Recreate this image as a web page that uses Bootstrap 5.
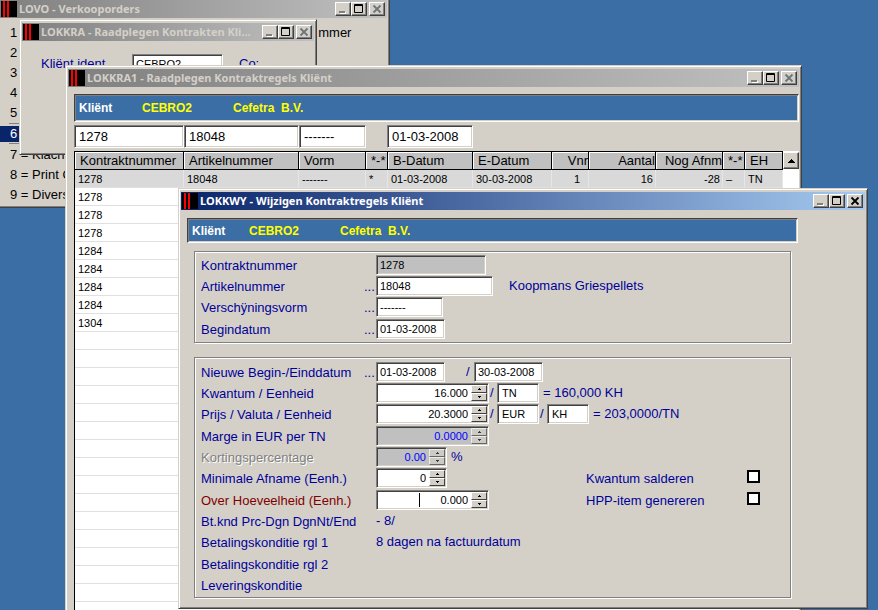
<!DOCTYPE html>
<html lang="nl">
<head>
<meta charset="utf-8">
<meta name="viewport" content="width=device-width, initial-scale=1">
<title>LOKKWY - Wijzigen Kontraktregels Kliënt</title>
<link href="https://cdn.jsdelivr.net/npm/bootstrap@5.3.0/dist/css/bootstrap.min.css" rel="stylesheet">
<style>
:root{--face:#d4d0c8;--desk:#3a6ea5;--ink:#000099}
body{background:var(--desk);font:13px/18px "Liberation Sans",Arial,sans-serif;color:#000}
.desktop{min-height:100vh}
.ink{color:var(--ink)}
/* windows on the desktop */
.win{position:absolute;background:var(--face);border:1px solid;border-color:var(--face) #404040 #404040 var(--face);box-shadow:inset 1px 1px #fff,inset -1px -1px #808080;padding:3px 2px}
.win-lovo{left:-3px;top:-4px;width:393px;height:212px}
.win-lokkra{left:19px;top:19px;width:298px;height:136px}
.win-lokkra1{left:65px;top:65px;width:737px;bottom:-4px;overflow:hidden}
.win-lokkwy{left:178px;top:188px;width:690px}
.title-bar{height:18px;padding:0 2px 0 1px;background:linear-gradient(90deg,#808080,#c0c0c0);color:var(--face)}
.title-bar.active-bar{background:linear-gradient(90deg,#0a246a,#a6caf0);color:#fff}
.title-text{font:bold 11px/15px "Noto Sans",Tahoma,sans-serif;margin:0;padding:0 0 2px 2px}
.title-bar svg{flex:none}
.cap-btn{width:16px;height:14px;flex:none;padding:0;border:1px solid;border-color:#fff #404040 #404040 #fff;box-shadow:inset -1px -1px #808080;background:var(--face);display:flex}
.cap-btn:last-child{margin-left:2px}
/* sunken and etched surfaces */
.sunken{border:1px solid;border-color:#808080 #fff #fff #808080;box-shadow:inset 1px 1px #404040,inset -1px -1px var(--face);background:#fff;border-radius:0}
.banner{background:var(--desk);border:1px solid;border-color:#404040 #fff #fff #404040;box-shadow:inset 1px 1px #808080,inset -1px -1px var(--face);font-weight:bold;font-size:12px;color:#ff0;padding-left:4px;height:28px;white-space:pre}
.banner .b-label{color:#fff;width:63px}
.banner .b-code{width:91px}
.banner.low{height:25px}
.banner.low .b-label{width:57px}
.etched{border:1px solid #808080;box-shadow:inset 1px 1px #fff,1px 1px #fff;padding:3px 0 2px 6px}
.etched+.etched{margin-top:14px;padding:4px 0 1px 6px}
input.sunken{height:20px;padding:0 3px;font-size:11px;line-height:16px;color:#000;min-width:0;outline:0}
.filters{padding:3px 0}
.filters input.sunken{height:23px;font-size:13px;padding-left:4px}
.filters .apart{margin-left:21px}
.w-42{width:42px}.w-67{width:67px}.w-69{width:69px}.w-71{width:71px}.w-86{width:86px}.w-91{width:91px}.w-110{width:110px}.w-113{width:113px}.w-115{width:115px}.w-117{width:117px}
input.sunken.w-42{padding-left:4px}
.off,input.off{background:#c0c0c0}
.spin{height:20px;padding:1px}
.spin input{border:0;background:none;flex:1;min-width:0;padding:0 3px 0 0;text-align:right;font-size:11px;line-height:16px;outline:0}
.spin.off input{color:#00f}
.spin-btns{width:16px}
.spin-btns button{flex:1;padding:0;border:1px solid;border-color:#fff #404040 #404040 #fff;background:var(--face);display:flex;align-items:center;justify-content:center;min-height:0}
.spin.off button{opacity:.7}
.caret-bar{width:1px;height:14px;background:#000;margin-left:41px}
/* form grid */
.form-rows{display:grid;grid-template-columns:163px 12px 210px 161px 1fr;grid-auto-rows:21px 21px 22px;color:var(--ink);white-space:nowrap}
.form-rows>label,.form-rows>.lbl{grid-column:1;line-height:21px}
.form-rows>.dots{grid-column:2;line-height:21px}
.form-rows>.fld{grid-column:3/-1;display:flex;align-items:center;height:20px}
.form-rows>.fld.short{grid-column:3}
.form-rows>.opt{grid-column:4;line-height:21px}
.form-rows>.tick{grid-column:5}
.dim{color:#808080;text-shadow:1px 1px #fff}
.warn{color:#800000}
.slash{width:8px;padding-left:1px}
.slash-date{width:29px;padding-left:21px}
.tick{appearance:none;width:13px;height:13px;border:2px solid #000;background:#fff;margin:2px 0 0}
/* contract lines */
.lines{table-layout:fixed;border-collapse:separate;border-spacing:0;border:1px solid #000;border-width:1px 0 0 1px;background:#fff;flex:1;width:1px}
.lines th,.lines td{padding:0;height:18px;white-space:nowrap;overflow:hidden}
.lines th{font-weight:normal;line-height:17px;background:#c0c0c0;border:solid #000;border-width:0 1px 1px 0;box-shadow:inset 1px 1px #fff;padding-left:5px}
.lines td{font-size:11px;line-height:15px;border-bottom:1px solid #e0e0e0;padding:2px 2px 0 3px}
.lines .current td{background:#d9d9d9;border-right:1px solid #e6e6e6}
.lines .num{text-align:right}
.lines th.num{padding-left:0}
.scroll-col{width:16px;background:#fff}
.scroll-col button{width:16px;height:17px;margin-top:1px;padding:0;border:1px solid;border-color:#fff #404040 #404040 #fff;box-shadow:inset -1px -1px #808080;background:var(--face);display:flex;align-items:center;justify-content:center}
/* menu */
.menu{padding:5px 0 0 10px;line-height:20px}
.menu .chosen{position:relative;height:16px;line-height:16px;margin:3px 0 3px -10px;padding-left:10px;background:#0a246a;color:#fff}
.menu .chosen::before{content:"";position:absolute;left:9px;width:12px;top:-3px;height:21px;border:solid #808080;border-width:1px 0}
.menu .tail{margin-left:301px}
.ident{padding:13px 0 0 19px}
.lokkra1-body{padding:7px 0 0 6px}
.wy-body{padding:8px 67px 7px 6px}
.wy-groups{padding:8px 7px 0}
</style>
</head>
<body>
<svg width="0" height="0" class="d-none" aria-hidden="true">
  <symbol id="logo" viewBox="0 0 16 16"><path fill="#000" d="M0 0h16v16H0z"/><path fill="#f00" d="M2 0h2v16H2zM6 0h2v16H6z"/></symbol>
  <symbol id="min" viewBox="0 0 14 12"><path fill="#fff" d="M4 9h6v2H4z"/><path fill="#808080" d="M3 8h6v2H3z"/></symbol>
  <symbol id="max" viewBox="0 0 14 12"><path fill="none" stroke="#000" d="M2.5 1.5h8v8h-8zM2 2.5h9"/></symbol>
  <symbol id="cls" viewBox="0 0 14 12"><path fill="none" stroke="currentColor" stroke-width="1.8" d="M3.5 2.5l7 7M10.5 2.5l-7 7"/></symbol>
  <symbol id="up" viewBox="0 0 7 4"><path d="M3 0h1v1h1v1h1v1h1v1H0V3h1V2h1V1h1z"/></symbol>
  <symbol id="sup" viewBox="0 0 3 2"><path d="M1 0h1v1h1v1H0V1h1z"/></symbol>
  <symbol id="sdn" viewBox="0 0 3 2"><path d="M0 0h3v1H2v1H1V1H0z"/></symbol>
</svg>
<main class="desktop position-relative overflow-hidden">

  <section class="win win-lovo">
    <div class="title-bar d-flex align-items-center">
      <svg width="16" height="16"><use href="#logo"/></svg>
      <h2 class="title-text flex-grow-1 text-truncate">LOVO - Verkooporders</h2>
      <button class="cap-btn" aria-label="Minimaliseren"><svg width="14" height="12"><use href="#min"/></svg></button>
      <button class="cap-btn" aria-label="Maximaliseren"><svg width="14" height="12"><use href="#max"/></svg></button>
      <button class="cap-btn text-secondary" aria-label="Sluiten"><svg width="14" height="12"><use href="#cls"/></svg></button>
    </div>
    <ul class="menu list-unstyled mb-0">
      <li class="d-flex"><span>1</span><span class="tail">mmer</span></li>
      <li>2</li><li>3</li><li>4</li><li>5</li>
      <li class="chosen">6</li>
      <li>7 = Klacht</li><li>8 = Print O</li><li>9 = Divers</li>
    </ul>
  </section>

  <section class="win win-lokkra">
    <div class="title-bar d-flex align-items-center">
      <svg width="16" height="16"><use href="#logo"/></svg>
      <h2 class="title-text flex-grow-1 text-truncate">LOKKRA - Raadplegen Kontrakten Kli...</h2>
      <button class="cap-btn" aria-label="Minimaliseren"><svg width="14" height="12"><use href="#min"/></svg></button>
      <button class="cap-btn" aria-label="Maximaliseren"><svg width="14" height="12"><use href="#max"/></svg></button>
      <button class="cap-btn text-secondary" aria-label="Sluiten"><svg width="14" height="12"><use href="#cls"/></svg></button>
    </div>
    <div class="ident d-flex align-items-center">
      <label for="ident" class="w-91 ink">Kliënt ident</label>
      <input id="ident" class="sunken w-91" value="CEBRO2">
      <span class="ps-3 ink">Co:</span>
    </div>
  </section>

  <section class="win win-lokkra1">
    <div class="title-bar d-flex align-items-center">
      <svg width="16" height="16"><use href="#logo"/></svg>
      <h2 class="title-text flex-grow-1 text-truncate">LOKKRA1 - Raadplegen Kontraktregels Kliënt</h2>
      <button class="cap-btn" aria-label="Minimaliseren"><svg width="14" height="12"><use href="#min"/></svg></button>
      <button class="cap-btn" aria-label="Maximaliseren"><svg width="14" height="12"><use href="#max"/></svg></button>
      <button class="cap-btn text-secondary" aria-label="Sluiten"><svg width="14" height="12"><use href="#cls"/></svg></button>
    </div>
    <div class="lokkra1-body">
      <div class="banner d-flex align-items-center"><span class="b-label">Kliënt</span><span class="b-code">CEBRO2</span><span>Cefetra  B.V.</span></div>
      <div class="filters d-flex">
        <input class="sunken w-110" aria-label="Kontraktnummer" value="1278">
        <input class="sunken w-115" aria-label="Artikelnummer" value="18048">
        <input class="sunken w-67" aria-label="Vorm" value="-------">
        <input class="sunken w-86 apart" aria-label="B-Datum" value="01-03-2008">
      </div>
      <div class="d-flex">
        <table class="lines">
          <colgroup><col style="width:109px"><col style="width:115px"><col style="width:67px"><col style="width:22px"><col style="width:85px"><col style="width:79px"><col style="width:37px"><col style="width:67px"><col style="width:67px"><col style="width:22px"><col></colgroup>
          <thead><tr><th>Kontraktnummer</th><th>Artikelnummer</th><th>Vorm</th><th>*-*</th><th>B-Datum</th><th>E-Datum</th><th class="num">Vnr</th><th class="num">Aantal</th><th class="num">Nog Afnm</th><th>*-*</th><th>EH</th></tr></thead>
          <tbody>
            <tr class="current"><td>1278</td><td>18048</td><td>-------</td><td>*</td><td>01-03-2008</td><td>30-03-2008</td><td class="num pe-2">1</td><td class="num">16</td><td class="num">-28</td><td>–</td><td>TN</td></tr>
            <tr><td colspan="11">1278</td></tr>
            <tr><td colspan="11">1278</td></tr>
            <tr><td colspan="11">1278</td></tr>
            <tr><td colspan="11">1284</td></tr>
            <tr><td colspan="11">1284</td></tr>
            <tr><td colspan="11">1284</td></tr>
            <tr><td colspan="11">1284</td></tr>
            <tr><td colspan="11">1304</td></tr>
            <tr><td colspan="11"></td></tr><tr><td colspan="11"></td></tr><tr><td colspan="11"></td></tr><tr><td colspan="11"></td></tr>
            <tr><td colspan="11"></td></tr><tr><td colspan="11"></td></tr><tr><td colspan="11"></td></tr><tr><td colspan="11"></td></tr>
            <tr><td colspan="11"></td></tr><tr><td colspan="11"></td></tr><tr><td colspan="11"></td></tr><tr><td colspan="11"></td></tr>
            <tr><td colspan="11"></td></tr><tr><td colspan="11"></td></tr><tr><td colspan="11"></td></tr><tr><td colspan="11"></td></tr>
          </tbody>
        </table>
        <div class="scroll-col"><button aria-label="Omhoog"><svg width="7" height="4"><use href="#up"/></svg></button></div>
      </div>
    </div>
  </section>

  <section class="win win-lokkwy">
    <div class="title-bar active-bar d-flex align-items-center">
      <svg width="16" height="16"><use href="#logo"/></svg>
      <h1 class="title-text flex-grow-1 text-truncate">LOKKWY - Wijzigen Kontraktregels Kliënt</h1>
      <button class="cap-btn" aria-label="Minimaliseren"><svg width="14" height="12"><use href="#min"/></svg></button>
      <button class="cap-btn" aria-label="Maximaliseren"><svg width="14" height="12"><use href="#max"/></svg></button>
      <button class="cap-btn text-black" aria-label="Sluiten"><svg width="14" height="12"><use href="#cls"/></svg></button>
    </div>
    <form class="wy-body">
      <div class="banner low d-flex align-items-center"><span class="b-label">Kliënt</span><span class="b-code">CEBRO2</span><span>Cefetra  B.V.</span></div>
      <div class="wy-groups">
        <div class="etched form-rows">
          <label for="kn">Kontraktnummer</label><div class="fld"><input id="kn" class="sunken off w-110" value="1278" readonly></div>
          <label for="an">Artikelnummer</label><span class="dots">...</span><div class="fld"><input id="an" class="sunken w-117" value="18048"><span class="ps-3">Koopmans Griespellets</span></div>
          <label for="vv">Verschÿningsvorm</label><span class="dots">...</span><div class="fld"><input id="vv" class="sunken w-67" value="-------"></div>
          <label for="bd">Begindatum</label><span class="dots">...</span><div class="fld"><input id="bd" class="sunken w-69" value="01-03-2008"></div>
        </div>
        <div class="etched form-rows">
          <label for="nb">Nieuwe Begin-/Einddatum</label><span class="dots">...</span>
          <div class="fld"><input id="nb" class="sunken w-69" value="01-03-2008"><span class="slash-date">/</span><input class="sunken w-69" aria-label="Einddatum" value="30-03-2008"></div>
          <label for="kw">Kwantum / Eenheid</label>
          <div class="fld"><div class="sunken spin w-113 d-flex"><input id="kw" value="16.000"><span class="spin-btns d-flex flex-column"><button type="button" aria-label="Meer"><svg width="3" height="2"><use href="#sup"/></svg></button><button type="button" aria-label="Minder"><svg width="3" height="2"><use href="#sdn"/></svg></button></span></div><span class="slash">/</span><input class="sunken w-42" aria-label="Eenheid" value="TN"><span class="ps-1">= 160,000 KH</span></div>
          <label for="pr">Prijs / Valuta / Eenheid</label>
          <div class="fld"><div class="sunken spin w-113 d-flex"><input id="pr" value="20.3000"><span class="spin-btns d-flex flex-column"><button type="button" aria-label="Meer"><svg width="3" height="2"><use href="#sup"/></svg></button><button type="button" aria-label="Minder"><svg width="3" height="2"><use href="#sdn"/></svg></button></span></div><span class="slash">/</span><input class="sunken w-42" aria-label="Valuta" value="EUR"><span class="slash">/</span><input class="sunken w-42" aria-label="Prijseenheid" value="KH"><span class="ps-1">= 203,0000/TN</span></div>
          <label for="mg">Marge in EUR per TN</label>
          <div class="fld"><div class="sunken spin off w-113 d-flex"><input id="mg" value="0.0000" readonly><span class="spin-btns d-flex flex-column"><button type="button" aria-label="Meer"><svg width="3" height="2"><use href="#sup"/></svg></button><button type="button" aria-label="Minder"><svg width="3" height="2"><use href="#sdn"/></svg></button></span></div></div>
          <label for="kp" class="dim">Kortingspercentage</label>
          <div class="fld"><div class="sunken spin off w-71 d-flex"><input id="kp" value="0.00" readonly><span class="spin-btns d-flex flex-column"><button type="button" aria-label="Meer"><svg width="3" height="2"><use href="#sup"/></svg></button><button type="button" aria-label="Minder"><svg width="3" height="2"><use href="#sdn"/></svg></button></span></div><span class="ps-1">%</span></div>
          <label for="ma">Minimale Afname (Eenh.)</label>
          <div class="fld short"><div class="sunken spin w-71 d-flex"><input id="ma" value="0"><span class="spin-btns d-flex flex-column"><button type="button" aria-label="Meer"><svg width="3" height="2"><use href="#sup"/></svg></button><button type="button" aria-label="Minder"><svg width="3" height="2"><use href="#sdn"/></svg></button></span></div></div>
          <label for="ks" class="opt">Kwantum salderen</label><input type="checkbox" id="ks" class="tick">
          <label for="oh" class="warn">Over Hoeveelheid (Eenh.)</label>
          <div class="fld short"><div class="sunken spin w-113 d-flex align-items-center"><span class="caret-bar"></span><input id="oh" value="0.000"><span class="spin-btns d-flex flex-column align-self-stretch"><button type="button" aria-label="Meer"><svg width="3" height="2"><use href="#sup"/></svg></button><button type="button" aria-label="Minder"><svg width="3" height="2"><use href="#sdn"/></svg></button></span></div></div>
          <label for="hp" class="opt">HPP-item genereren</label><input type="checkbox" id="hp" class="tick">
          <span class="lbl">Bt.knd Prc-Dgn DgnNt/End</span><div class="fld">- 8/</div>
          <span class="lbl">Betalingskonditie rgl 1</span><div class="fld">8 dagen na factuurdatum</div>
          <span class="lbl">Betalingskonditie rgl 2</span>
          <span class="lbl">Leveringskonditie</span>
        </div>
      </div>
    </form>
  </section>
</main>
<script src="https://cdn.jsdelivr.net/npm/bootstrap@5.3.0/dist/js/bootstrap.bundle.min.js"></script>
</body>
</html>
